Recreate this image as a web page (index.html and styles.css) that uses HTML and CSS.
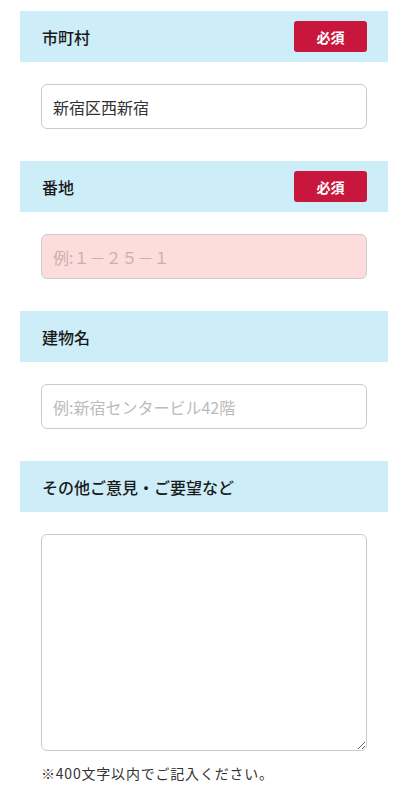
FILE: index.html
```html
<!DOCTYPE html>
<html lang="ja">
<head>
<meta charset="utf-8">
<link rel="stylesheet" href="styles.css">
</head>
<body>
<div class="form">
  <div class="section">
    <div class="head"><span class="label">市町村</span><span class="badge">必須</span></div>
    <div class="field"><input class="input" type="text" value="新宿区西新宿"></div>
  </div>
  <div class="section">
    <div class="head"><span class="label">番地</span><span class="badge">必須</span></div>
    <div class="field"><input class="input error" type="text" placeholder="例:１－２５－１"></div>
  </div>
  <div class="section">
    <div class="head"><span class="label">建物名</span></div>
    <div class="field"><input class="input" type="text" placeholder="例:新宿センタービル42階"></div>
  </div>
  <div class="section">
    <div class="head"><span class="label">その他ご意見・ご要望など</span></div>
    <div class="field"><textarea class="textarea"></textarea>
      <p class="note">※400文字以内でご記入ください。</p>
    </div>
  </div>
</div>
</body>
</html>
```
FILE: styles.css
```css
html, body {
  margin: 0;
  padding: 0;
  background: #fff;
  font-family: "Noto Sans CJK JP", "Noto Sans", sans-serif;
  color: #222;
}
.form {
  padding: 11px 20px 0;
}
.section {
  margin-bottom: 32px;
}
.head {
  height: 51px;
  background: #cdedf9;
  display: flex;
  align-items: center;
  justify-content: space-between;
  padding: 0 21px 0 22px;
}
.label {
  font-size: 16px;
  font-weight: 500;
  color: #1a1a1a;
}
.badge {
  width: 73px;
  height: 31px;
  background: #c8163c;
  color: #fff;
  border-radius: 3px;
  font-size: 14px;
  font-weight: bold;
  display: flex;
  align-items: center;
  justify-content: center;
}
.field {
  padding: 22px 21px 0;
}
.input, .textarea {
  display: block;
  box-sizing: border-box;
  width: 100%;
  border: 1px solid #cccccc;
  border-radius: 6px;
  background: #fff;
  font-family: "Noto Sans CJK JP", "Noto Sans", sans-serif;
  font-size: 16px;
  color: #333;
  margin: 0;
  outline: none;
}
.input {
  height: 45px;
  padding: 0 11px;
}
.input::placeholder {
  color: #bbbbbb;
}
.input.error {
  background: #ffdcdc;
}
.input.error::placeholder {
  color: #c8b0b0;
}
.textarea {
  height: 217px;
  resize: vertical;
  padding: 11px;
}
.note {
  margin: 12px 0 0;
  font-size: 14px;
  letter-spacing: 0.8px;
  color: #333;
}
```
